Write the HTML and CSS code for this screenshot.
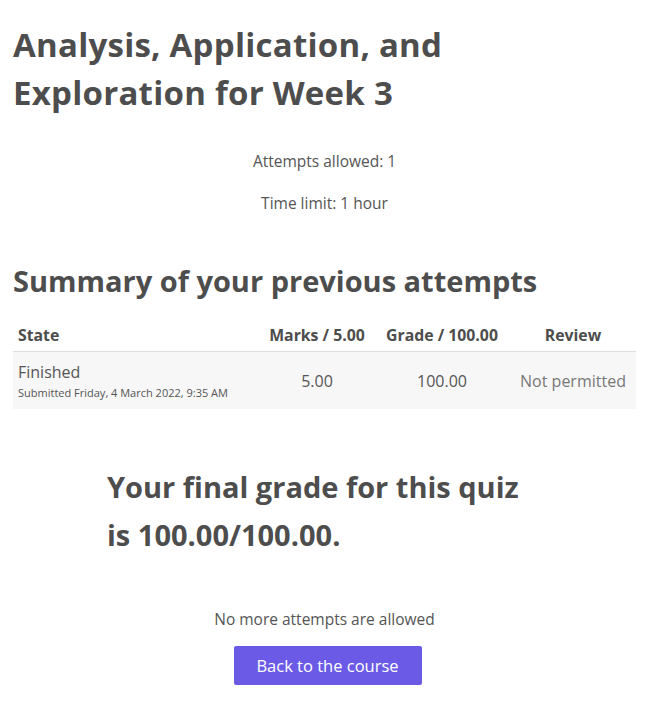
FILE: index.html
```html
<!DOCTYPE html>
<html>
<head>
<meta charset="utf-8">
<link rel="stylesheet" href="styles.css">
</head>
<body>
<main class="page">
  <h1 class="title">Analysis, Application, and Exploration for Week 3</h1>
  <div class="info">
    <p>Attempts allowed: 1</p>
    <p>Time limit: 1 hour</p>
  </div>
  <h2 class="summary">Summary of your previous attempts</h2>
  <table class="attempts">
    <colgroup>
      <col class="w-state">
      <col class="w-marks">
      <col class="w-grade">
      <col class="w-review">
    </colgroup>
    <thead>
      <tr>
        <th class="c-state">State</th>
        <th class="c-num">Marks / 5.00</th>
        <th class="c-num">Grade / 100.00</th>
        <th class="c-num">Review</th>
      </tr>
    </thead>
    <tbody>
      <tr>
        <td class="c-state">Finished<span class="sub">Submitted Friday, 4 March 2022, 9:35 AM</span></td>
        <td class="c-num">5.00</td>
        <td class="c-num">100.00</td>
        <td class="c-num muted">Not permitted</td>
      </tr>
    </tbody>
  </table>
  <div class="feedback">
    <h3 class="final">Your final grade for this quiz is 100.00/100.00.</h3>
  </div>
  <div class="actions">
    <p>No more attempts are allowed</p>
    <button class="btn">Back to the course</button>
  </div>
</main>
</body>
</html>
```

FILE: styles.css
```css
html, body {
  margin: 0;
  padding: 0;
  background: #fff;
}
body {
  font-family: "Open Sans", "Noto Sans", sans-serif;
  color: #555;
  font-size: 15.5px;
}
.page {
  width: 623px;
  padding: 21px 0 0 13px;
}
.title {
  font-size: 33px;
  font-weight: 700;
  line-height: 48px;
  color: #4d4d4d;
  margin: 0;
  letter-spacing: 0.25px;
}
.info {
  text-align: center;
  margin-top: 33px;
}
.info p {
  margin: 0 0 20px;
  line-height: 22px;
}
.summary {
  font-size: 29px;
  font-weight: 700;
  color: #4d4d4d;
  margin: 47px 0 0;
  line-height: 40px;
}
.attempts {
  width: 623px;
  table-layout: fixed;
  border-collapse: collapse;
  margin-top: 17px;
}
.w-state { width: 247px; }
.w-marks { width: 114px; }
.w-grade { width: 136px; }
.w-review { width: 126px; }
.attempts th {
  font-weight: 700;
  font-size: 15.8px;
  height: 33px;
  padding: 0 5px;
  border-bottom: 1px solid #dedede;
  color: #4d4d4d;
  white-space: nowrap;
}
.attempts td {
  background: #f7f7f7;
  height: 57px;
  padding: 0 5px;
  font-size: 16px;
}
.c-state {
  text-align: left;
}
.c-num {
  text-align: center;
}
.sub {
  display: block;
  font-size: 11px;
  margin-top: 2px;
}
.muted {
  color: #777;
}
.feedback {
  width: 435px;
  margin: 54px auto 0;
}
.final {
  font-size: 29px;
  font-weight: 700;
  line-height: 48px;
  color: #4d4d4d;
  margin: 0;
}
.actions {
  text-align: center;
  margin-top: 49px;
}
.actions p {
  margin: 0 0 16px;
  line-height: 22px;
}
.btn {
  font-family: inherit;
  font-size: 16.5px;
  color: #fff;
  background: #6b5ae6;
  border: none;
  border-radius: 2px;
  width: 188px;
  height: 39px;
  margin-left: 6px;
}
```
